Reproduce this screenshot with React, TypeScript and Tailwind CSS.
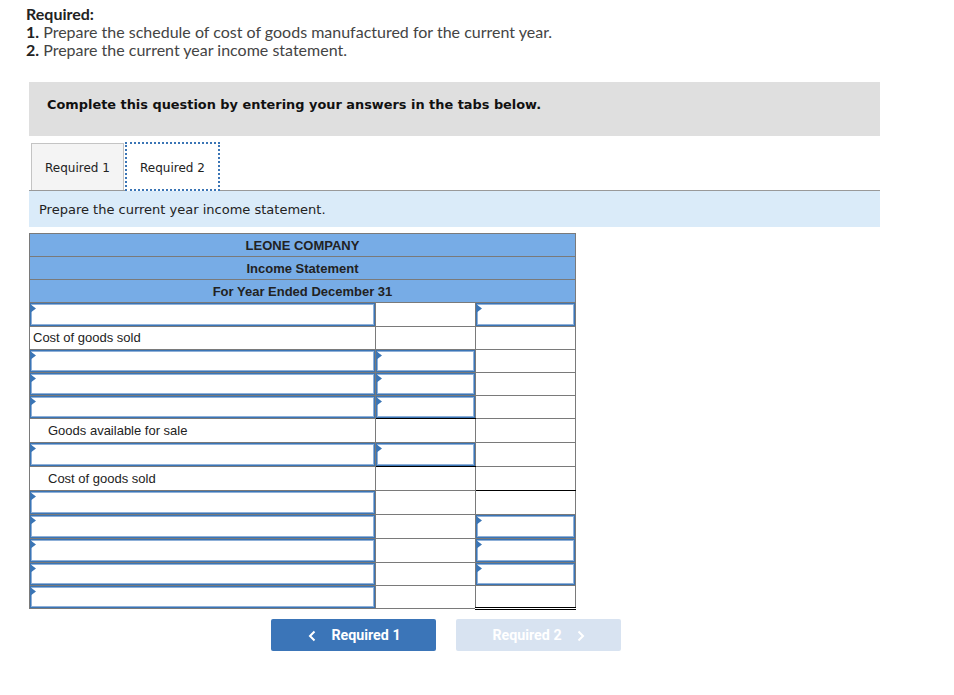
const sans = "font-['Lato','Open_Sans',sans-serif]"

type Cell = { input?: boolean; line?: "single" | "double" }
type Row = { label?: string; indent?: boolean; tall?: boolean; first?: Cell; mid?: Cell; last?: Cell }

const rows: Row[] = [
  { first: { input: true }, last: { input: true }, tall: true },
  { label: "Cost of goods sold" },
  { first: { input: true }, mid: { input: true } },
  { first: { input: true }, mid: { input: true } },
  { first: { input: true }, mid: { input: true, line: "single" } },
  { label: "Goods available for sale", indent: true, tall: true },
  { first: { input: true }, mid: { input: true, line: "single" }, tall: true },
  { label: "Cost of goods sold", indent: true, tall: true, last: { line: "single" } },
  { first: { input: true }, tall: true },
  { first: { input: true }, last: { input: true }, tall: true },
  { first: { input: true }, last: { input: true }, tall: true },
  { first: { input: true }, last: { input: true, line: "single" } },
  { first: { input: true }, last: { line: "double" } },
]

function Answer({ tall }: { tall?: boolean }) {
  return (
    <div className="relative">
      <input
        className={
          "block w-full border border-[#3b75b5] bg-white shadow-[inset_0_0_0_1px_#8fb0d8] outline-none " +
          (tall ? "h-[23px]" : "h-[22px]")
        }
      />
      <svg className="absolute left-0 top-[1px]" width="6" height="9" viewBox="0 0 6 9">
        <path d="M0 0L6 4.5L0 9Z" fill="#3b75b5" />
      </svg>
    </div>
  )
}

function ValueCell({ cell, tall }: { cell?: Cell; tall?: boolean }) {
  let edge = "border-b border-b-[#7a7a7a]"
  if (cell?.line === "single") edge = "border-b border-b-black"
  if (cell?.line === "double") edge = "border-b-[3px] border-double border-b-black"
  return (
    <td className={"border-x border-t border-x-[#7a7a7a] border-t-[#7a7a7a] p-0 " + edge}>
      {cell?.input && <Answer tall={tall} />}
    </td>
  )
}

function HeaderRow({ children }: { children: string }) {
  return (
    <tr className="h-[23px]">
      <th
        colSpan={3}
        className="border border-[#7a7a7a] bg-[#77ace6] p-0 text-center text-[13px] font-bold leading-none text-[#222]"
      >
        {children}
      </th>
    </tr>
  )
}

export default function App() {
  return (
    <div className="min-h-[695px] bg-white pt-[5px]">
      <div className={"ml-[26px] text-[16px] leading-[18px] text-[#444] " + sans}>
        <p className="font-bold text-[#222]">Required:</p>
        <p>
          <b className="text-[#222]">1.</b> Prepare the schedule of cost of goods manufactured for the current year.
        </p>
        <p>
          <b className="text-[#222]">2.</b> Prepare the current year income statement.
        </p>
      </div>

      <div className="ml-[29px] mt-[23px] h-[54px] w-[851px] bg-[#dfdfdf] pl-[18px] pt-[14px] font-['DejaVu_Sans',sans-serif] text-[12.9px] font-bold leading-[17px] text-[#111]">
        Complete this question by entering your answers in the tabs below.
      </div>

      <div className="ml-[29px] mt-[6px] w-[851px] font-['DejaVu_Sans',sans-serif] text-[12px] text-[#222]">
        <div className="flex h-[49px] items-end border-b border-[#999]">
          <div className="ml-[2px] flex h-[47px] w-[93px] items-center justify-center border border-b-0 border-[#c4c4c4] bg-[#f4f4f4] pt-[1px]">
            Required 1
          </div>
          <div className="relative -mb-px ml-px flex h-[49px] w-[95px] items-center justify-center bg-white pt-[2px] outline-2 -outline-offset-2 outline-dotted outline-[#3b75b5]">
            Required 2
          </div>
        </div>
        <div className="flex h-[36px] items-center bg-[#daebf9] pl-[10px] pt-[2px] text-[13px] text-[#222]">
          Prepare the current year income statement.
        </div>
      </div>

      <table className="ml-[29px] mt-[6px] w-[546px] table-fixed border-collapse font-['Liberation_Sans',sans-serif] text-[13px]">
        <colgroup>
          <col className="w-[346px]" />
          <col className="w-[100px]" />
          <col className="w-[100px]" />
        </colgroup>
        <thead>
          <HeaderRow>LEONE COMPANY</HeaderRow>
          <HeaderRow>Income Statement</HeaderRow>
          <HeaderRow>For Year Ended December 31</HeaderRow>
        </thead>
        <tbody>
          {rows.map((row, i) => (
            <tr key={i} className={row.tall ? "h-[24px]" : "h-[23px]"}>
              {row.label ? (
                <td
                  className={
                    "border border-[#7a7a7a] py-0 pr-0 leading-none text-[#222] " +
                    (row.indent ? "pl-[18px]" : "pb-[2px] pl-[3px]")
                  }
                >
                  {row.label}
                </td>
              ) : (
                <ValueCell cell={row.first} tall={row.tall} />
              )}
              <ValueCell cell={row.mid} tall={row.tall} />
              <ValueCell cell={row.last} tall={row.tall} />
            </tr>
          ))}
        </tbody>
      </table>

      <div className="ml-[271px] mt-[9px] flex gap-[20px] font-['Roboto',sans-serif] text-[14.25px] font-bold text-white">
        <button className="flex h-[32px] w-[165px] items-center justify-center gap-[15px] rounded-[2px] bg-[#3b75b8] pl-[2px] pt-[2px]">
          <svg width="8" height="12" viewBox="0 0 8 12" fill="none" stroke="currentColor" strokeWidth="2">
            <path d="M6.5 1.5L2 6L6.5 10.5" />
          </svg>
          Required 1
        </button>
        <button className="flex h-[32px] w-[165px] items-center justify-center gap-[15px] rounded-[2px] bg-[#d8e3f1] pt-[2px]">
          Required 2
          <svg width="8" height="12" viewBox="0 0 8 12" fill="none" stroke="currentColor" strokeWidth="2">
            <path d="M1.5 1.5L6 6L1.5 10.5" />
          </svg>
        </button>
      </div>
    </div>
  )
}
